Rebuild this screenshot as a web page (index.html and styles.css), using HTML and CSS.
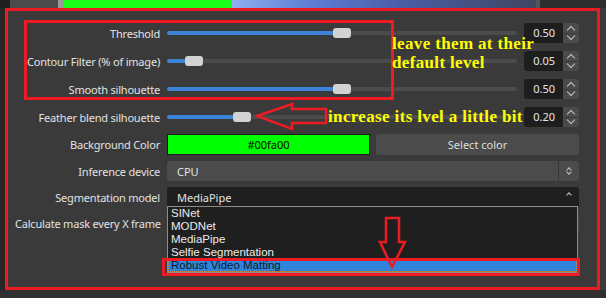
FILE: index.html
```html
<!DOCTYPE html>
<html lang="en">
<head>
    <meta charset="UTF-8">
    <title>Background removal filter</title>
    <link rel="stylesheet" href="styles.css">
</head>
<body>
    <div class="topbar">
        <span class="tb-dark"></span>
        <span class="tb-grey"></span>
        <span class="tb-light"></span>
        <span class="tb-green"></span>
        <span class="tb-image"></span>
        <span class="tb-edge"></span>
    </div>

    <div class="panel">
        <div class="sliders">
            <div class="row">
                <label>Threshold</label>
                <div class="slider-ctl">
                    <div class="track"><div class="fill" style="width:167px"></div><div class="handle" style="left:166px"></div></div>
                    <div class="spin"><span class="spin-val">0.50</span><span class="spin-btns"><i class="up"></i><i class="down"></i></span></div>
                </div>
            </div>
            <div class="row">
                <label>Contour Filter (% of image)</label>
                <div class="slider-ctl">
                    <div class="track"><div class="fill" style="width:19px"></div><div class="handle" style="left:18px"></div></div>
                    <div class="spin"><span class="spin-val">0.05</span><span class="spin-btns"><i class="up"></i><i class="down"></i></span></div>
                </div>
            </div>
            <div class="row">
                <label>Smooth silhouette</label>
                <div class="slider-ctl">
                    <div class="track"><div class="fill" style="width:167px"></div><div class="handle" style="left:166px"></div></div>
                    <div class="spin"><span class="spin-val">0.50</span><span class="spin-btns"><i class="up"></i><i class="down"></i></span></div>
                </div>
            </div>
            <div class="row">
                <label>Feather blend silhouette</label>
                <div class="slider-ctl">
                    <div class="track"><div class="fill" style="width:67px"></div><div class="handle" style="left:66px"></div></div>
                    <div class="spin"><span class="spin-val">0.20</span><span class="spin-btns"><i class="up"></i><i class="down"></i></span></div>
                </div>
            </div>
        </div>

        <div class="fields">
            <div class="row tall">
                <label>Background Color</label>
                <div class="color-ctl">
                    <div class="swatch">#00fa00</div>
                    <button class="btn">Select color</button>
                </div>
            </div>
            <div class="row">
                <label>Inference device</label>
                <div class="combo">
                    <span class="combo-text">CPU</span>
                    <span class="combo-arrows"><i class="up small"></i><i class="down small"></i></span>
                </div>
            </div>
            <div class="row">
                <label>Segmentation model</label>
                <div class="combo open">
                    <span class="combo-text">MediaPipe</span>
                    <span class="combo-arrows"><i class="up small"></i></span>
                </div>
            </div>
            <div class="row">
                <label>Calculate mask every X frame</label>
                <div class="combo"></div>
            </div>
        </div>
    </div>
    <div class="bottom"></div>

    <!-- dropdown popup of the segmentation model combo -->
    <ul class="popup">
        <li>SINet</li>
        <li>MODNet</li>
        <li>MediaPipe</li>
        <li>Selfie Segmentation</li>
        <li class="selected">Robust Video Matting</li>
    </ul>

    <!-- annotations drawn on the screenshot -->
    <div class="mark mark-outer"></div>
    <div class="mark mark-group"></div>
    <div class="mark mark-item"></div>
    <span class="note note-1">leave them at their<br>default level</span>
    <span class="note note-2">increase its lvel a little bit</span>
    <svg class="arrow arrow-left" width="74" height="30" viewBox="0 0 74 30">
        <polygon points="2,14 37,2 37,7 71,7 71,21 37,21 37,27" fill="none" stroke="#ed1c24" stroke-width="2.5"/>
    </svg>
    <svg class="arrow arrow-down" width="30" height="54" viewBox="0 0 30 54">
        <polygon points="8,2 21,2 21,26 27,26 14,51 2,26 8,26" fill="none" stroke="#ed1c24" stroke-width="2.5"/>
    </svg>
</body>
</html>
```

FILE: styles.css
```css
body {
    margin: 0;
    width: 606px;
    height: 298px;
    overflow: hidden;
    position: relative;
    background: #3a3a3a;
    font-family: "Noto Sans", "Open Sans", sans-serif;
    font-size: 11px;
    color: #e2e2e2;
}
.topbar {
    display: flex;
    height: 8px;
}
.topbar span {
    display: block;
}
.tb-dark { width: 10px; background: #1f1f1f; }
.tb-grey { width: 48px; background: #4b4b4b; }
.tb-light { width: 6px; background: #9a9a9a; }
.tb-green { width: 168px; background: #19ff19; }
.tb-image { width: 304px; background: linear-gradient(to right, #8fb0f0, #5f7fd6 25%, #4a5ea8 55%, #3f4660); }
.tb-edge { flex: 1; background: #2e2e2e; border-left: 4px solid #555; }

.panel {
    height: 282px;
    box-sizing: border-box;
    padding: 15px 27px 0 10px;
    border-left: 5px solid #262626;
    display: flex;
    flex-direction: column;
    gap: 7px;
}
.bottom {
    height: 8px;
    background: #2f2f2f;
}
.sliders {
    display: flex;
    flex-direction: column;
    gap: 8px;
}
.fields {
    display: flex;
    flex-direction: column;
    gap: 6px;
}
.row {
    display: grid;
    grid-template-columns: 145px 412px;
    column-gap: 7px;
    height: 20px;
    align-items: center;
}
.row.tall {
    height: 21px;
}
.row label {
    text-align: right;
    white-space: nowrap;
    letter-spacing: -0.2px;
}

/* sliders */
.slider-ctl {
    display: flex;
    align-items: center;
    gap: 7px;
    height: 20px;
}
.track {
    position: relative;
    width: 350px;
    height: 4px;
    border-radius: 2px;
    background: #4b4b4b;
}
.fill {
    height: 4px;
    border-radius: 2px;
    background: #3b84d8;
}
.handle {
    position: absolute;
    top: -3px;
    width: 18px;
    height: 10px;
    border-radius: 3px;
    background: #d2d2d2;
}
.spin {
    display: flex;
    width: 55px;
    height: 20px;
}
.spin-val {
    width: 39px;
    box-sizing: border-box;
    padding-right: 8px;
    text-align: right;
    line-height: 20px;
    background: #1e1e1e;
    border-radius: 3px 0 0 3px;
    color: #e6e6e6;
}
.spin-btns {
    display: flex;
    flex-direction: column;
    width: 16px;
    gap: 1px;
}
.spin-btns i {
    flex: 1;
    background: #4b4b4b;
    display: flex;
    align-items: center;
    justify-content: center;
}
.spin-btns i.up { border-radius: 0 3px 0 0; }
.spin-btns i.down { border-radius: 0 0 3px 0; }

/* chevrons */
i.up::before, i.down::before {
    content: "";
    display: block;
    width: 5px;
    height: 5px;
    border-left: 1.5px solid #c4c4c4;
    border-top: 1.5px solid #c4c4c4;
}
i.up::before { transform: translateY(2px) rotate(45deg); }
i.down::before { transform: translateY(-2px) rotate(225deg); }
i.small::before {
    width: 3px;
    height: 3px;
    border-width: 1px;
}

/* colour row */
.color-ctl {
    display: grid;
    grid-template-columns: 1fr 1fr;
    column-gap: 6px;
    height: 21px;
}
.swatch {
    background: #00ff00;
    border: 1px solid #1a1a1a;
    color: #000;
    text-align: center;
    line-height: 19px;
}
.btn {
    font: inherit;
    color: #dedede;
    background: #4b4b4b;
    border: none;
    border-radius: 3px;
    padding: 0;
}

/* combos */
.combo {
    display: flex;
    align-items: center;
    height: 20px;
    border-radius: 3px;
    background: #4b4b4b;
}
.combo.open {
    background: #1f1f1f;
    border-radius: 3px 3px 0 0;
}
.combo-text {
    flex: 1;
    padding-left: 10px;
}
.combo-arrows {
    width: 20px;
    height: 20px;
    display: flex;
    flex-direction: column;
    align-items: center;
    justify-content: center;
    gap: 2px;
    border-left: 1px solid #383838;
}
.combo.open .combo-arrows {
    border-left: none;
    justify-content: flex-start;
    padding-top: 4px;
    box-sizing: border-box;
}

/* popup list */
.popup {
    position: absolute;
    left: 167px;
    top: 206px;
    width: 409px;
    margin: 0;
    padding: 0;
    list-style: none;
    background: #1f1f1f;
    border: 1px solid #8c8c8c;
    font-family: "Liberation Sans", Arial, sans-serif;
    font-size: 11.5px;
}
.popup li {
    height: 13px;
    line-height: 13px;
    padding-left: 3px;
    color: #ececec;
}
.popup li.selected {
    background: #2f84dc;
    color: #101828;
    outline: 1px dotted #d08a3c;
    outline-offset: -1px;
}

/* annotations */
.mark {
    position: absolute;
    border: 3px solid #ed1c24;
}
.mark-outer { left: 5px; top: 8px; width: 589px; height: 276px; }
.mark-group { left: 24px; top: 20px; width: 364px; height: 74px; }
.mark-item { left: 162px; top: 258px; width: 412px; height: 12px; }
.note {
    position: absolute;
    font-family: "Liberation Serif", serif;
    font-weight: bold;
    font-size: 17px;
    letter-spacing: 0.35px;
    color: #ffff00;
    line-height: 19px;
    white-space: nowrap;
}
.note-1 { left: 392px; top: 34px; }
.note-2 { left: 328px; top: 107px; }
.arrow {
    position: absolute;
}
.arrow-left { left: 255px; top: 102px; }
.arrow-down { left: 378px; top: 216px; }
```
